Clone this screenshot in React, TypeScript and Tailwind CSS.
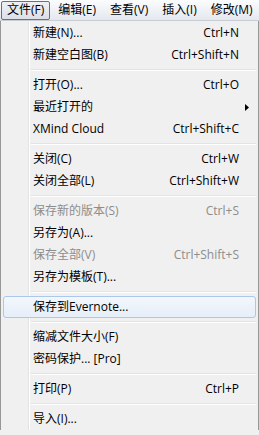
import React from 'react';

type Item =
  | {sep: true}
  | {
      sep?: false;
      label: string;
      shortcut?: string;
      disabled?: boolean;
      submenu?: boolean;
      active?: boolean;
    };

const items: Item[] = [
  {label: '新建(N)...', shortcut: 'Ctrl+N'},
  {label: '新建空白图(B)', shortcut: 'Ctrl+Shift+N'},
  {sep: true},
  {label: '打开(O)...', shortcut: 'Ctrl+O'},
  {label: '最近打开的', submenu: true},
  {label: 'XMind Cloud', shortcut: 'Ctrl+Shift+C'},
  {sep: true},
  {label: '关闭(C)', shortcut: 'Ctrl+W'},
  {label: '关闭全部(L)', shortcut: 'Ctrl+Shift+W'},
  {sep: true},
  {label: '保存新的版本(S)', shortcut: 'Ctrl+S', disabled: true},
  {label: '另存为(A)...'},
  {label: '保存全部(V)', shortcut: 'Ctrl+Shift+S', disabled: true},
  {label: '另存为模板(T)...'},
  {sep: true},
  {label: '保存到Evernote...', active: true},
  {sep: true},
  {label: '缩减文件大小(F)'},
  {label: '密码保护... [Pro]'},
  {sep: true},
  {label: '打印(P)', shortcut: 'Ctrl+P'},
  {sep: true},
  {label: '导入(I)...'},
];

const topMenus = ['编辑(E)', '查看(V)', '插入(I)', '修改(M)'];

const MenuRow: React.FC<{item: Exclude<Item, {sep: true}>}> = ({item}) => {
  const content = (
    <>
      <span className="flex-1 whitespace-nowrap">{item.label}</span>
      {item.shortcut && <span className="whitespace-nowrap">{item.shortcut}</span>}
      {item.submenu && (
        <svg width="4" height="7" viewBox="0 0 4 7" className="mr-[-10px]">
          <path d="M0 0 L4 3.5 L0 7 Z" fill="#000" />
        </svg>
      )}
    </>
  );

  if (item.active) {
    return (
      <div className="flex h-[22px] px-[2px]">
        <div className="flex flex-1 items-center rounded-[3px] border border-[#a9c8ec] bg-gradient-to-b from-[#f3f7fc] to-[#e6eef9] pl-[29px] pr-[17px] text-black">
          {content}
        </div>
      </div>
    );
  }

  return (
    <div
      className={`flex h-[22px] items-center ${
        item.disabled ? 'text-[#8d8d8d]' : 'text-black'
      }`}>
      <div className="h-full w-[28px] shrink-0 border-r border-[#e2e3e3]" />
      <div className="h-full w-px shrink-0 bg-white" />
      <div className="flex flex-1 items-center pl-[3px] pr-[19px]">{content}</div>
    </div>
  );
};

const Separator: React.FC = () => (
  <div className="flex h-[8px]">
    <div className="h-full w-[28px] shrink-0 border-r border-[#e2e3e3]" />
    <div className="h-full w-px shrink-0 bg-white" />
    <div className="flex flex-1 flex-col justify-center pl-[1px] pr-[2px]">
      <div className="h-px bg-[#e2e3e3]" />
      <div className="h-px bg-white" />
    </div>
  </div>
);

export default function App() {
  return (
    <div
      className="h-[435px] w-[259px] overflow-hidden bg-[#f0f0f0] text-[12px] leading-none"
      style={{fontFamily: '"Open Sans", "Noto Sans CJK SC", sans-serif'}}>
      <div className="flex h-[21px] items-center gap-[2px] overflow-hidden border-b border-[#c9ced6] bg-gradient-to-b from-[#fbfcfd] to-[#e4e8ee] pl-[1px] text-black">
        <div className="flex h-[19px] shrink-0 items-center whitespace-nowrap rounded-[2px] border border-[#707070] bg-gradient-to-b from-[#eef0f3] to-[#dde1e7] px-[5px]">
          文件(F)
        </div>
        {topMenus.map((m) => (
          <div
            key={m}
            className="flex h-[19px] shrink-0 items-center whitespace-nowrap px-[6px]">
            {m}
          </div>
        ))}
      </div>
      <div className="border-x border-[#979797] pt-[1px]">
        {items.map((item, i) =>
          item.sep ? <Separator key={i} /> : <MenuRow key={i} item={item} />,
        )}
      </div>
    </div>
  );
}
